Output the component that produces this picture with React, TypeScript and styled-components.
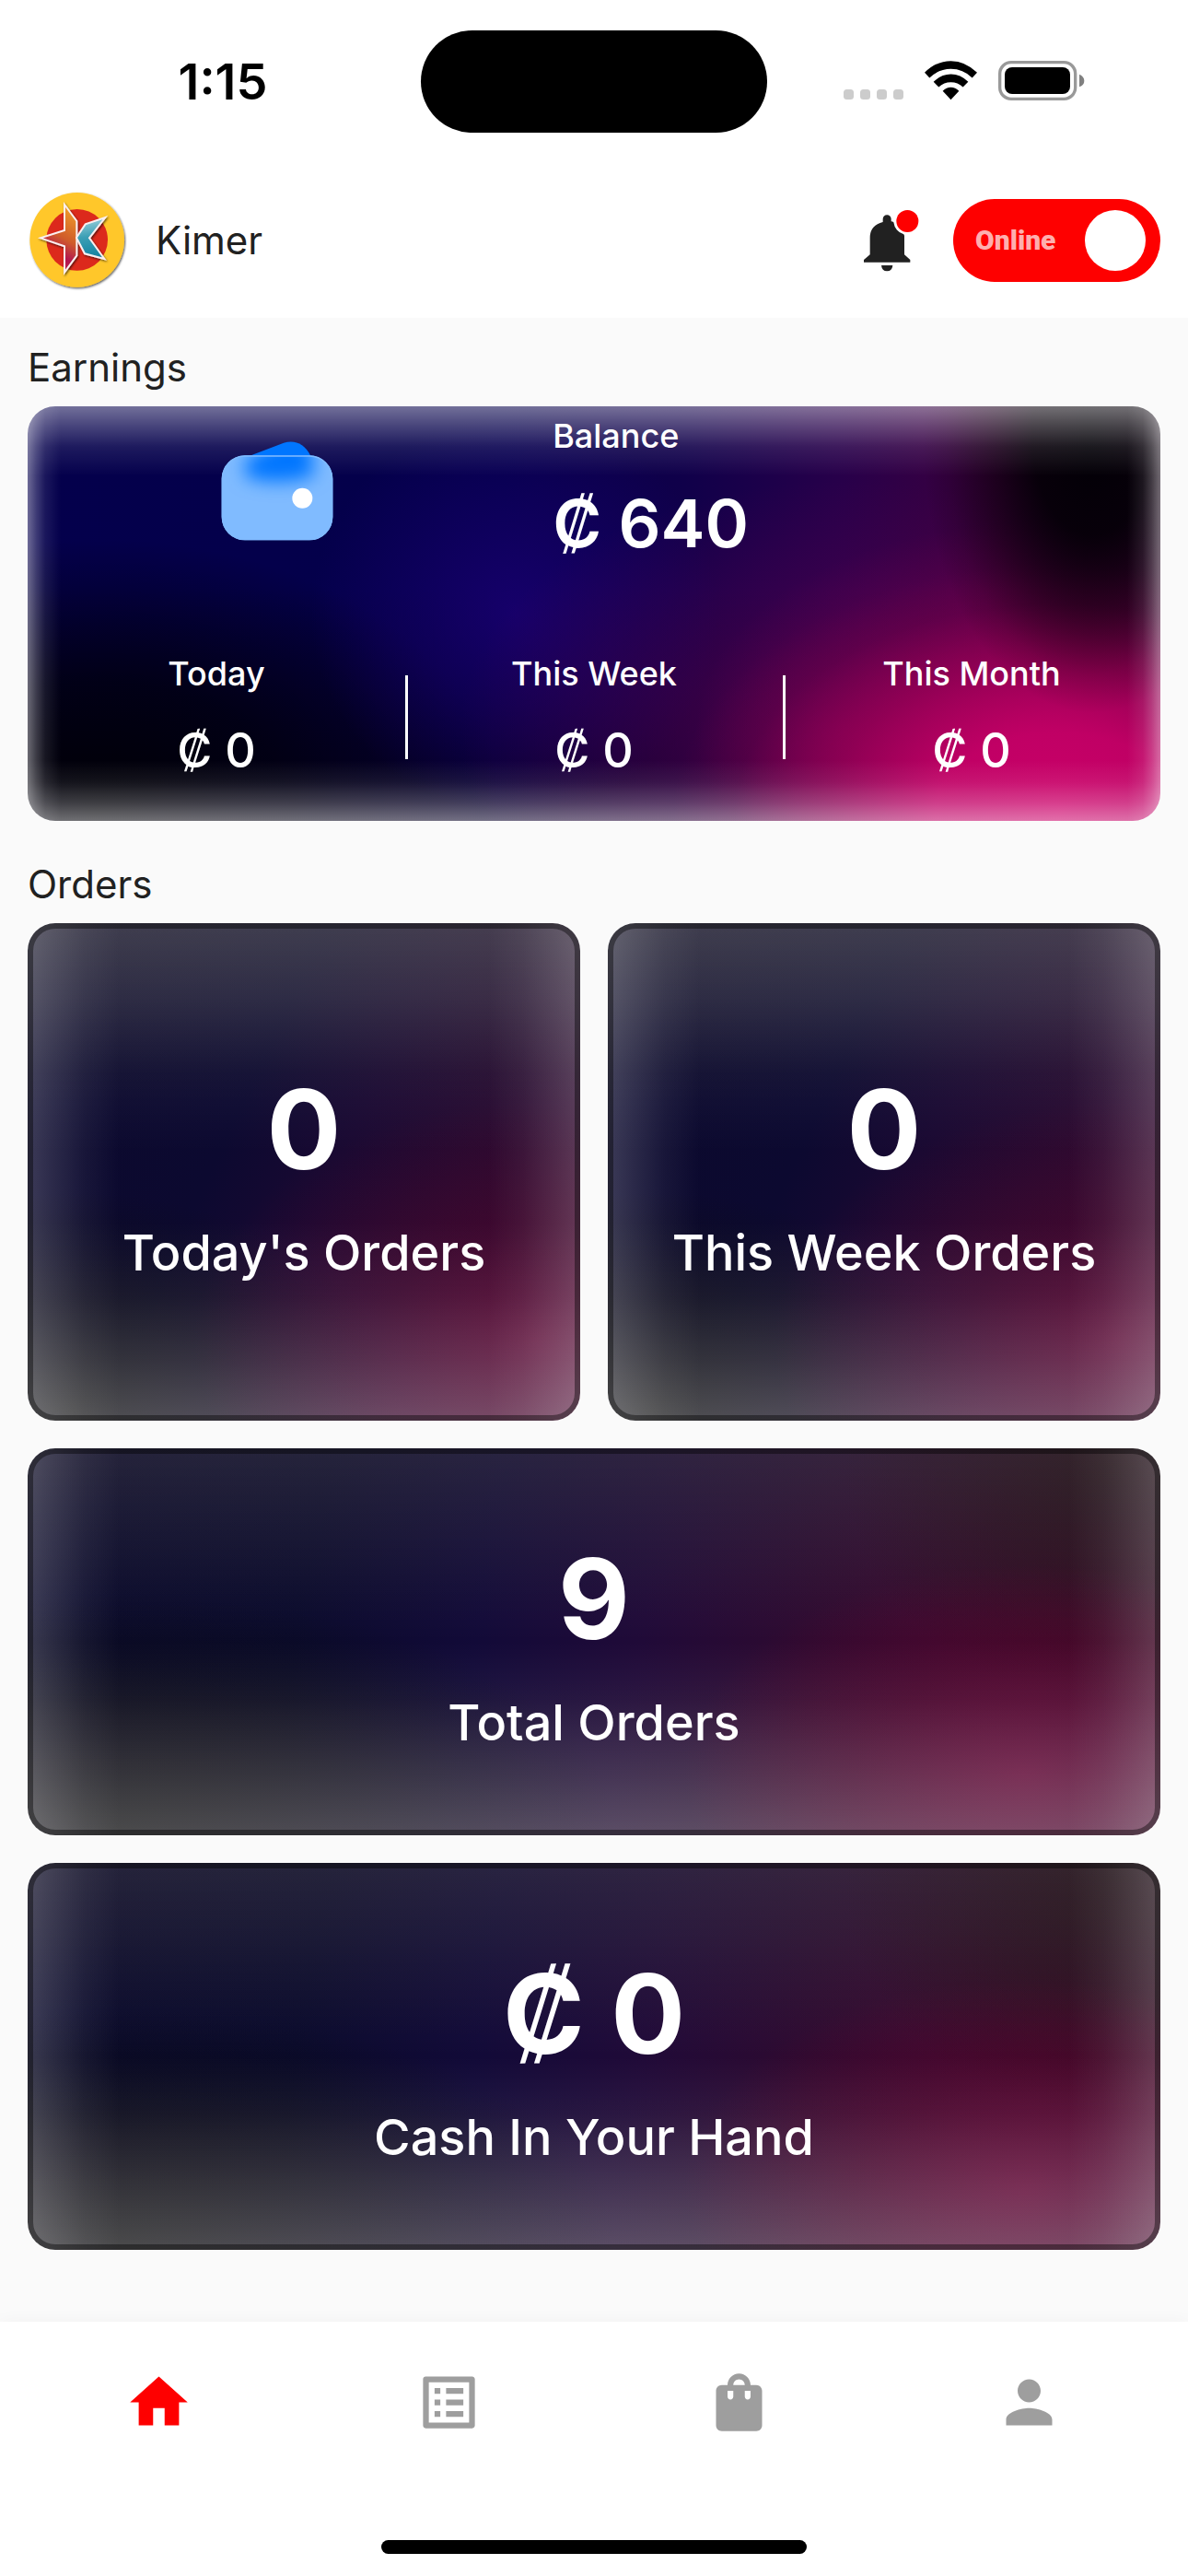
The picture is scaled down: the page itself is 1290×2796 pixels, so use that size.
import React from "react";
import styled, { createGlobalStyle, css } from "styled-components";
import { MdHome, MdListAlt, MdShoppingBag, MdPerson } from "react-icons/md";

const GlobalStyle = createGlobalStyle`
  *, *::before, *::after { box-sizing: border-box; }
  body {
    margin: 0;
    background: #fafafa;
    color: #212121;
    font-family: Inter, "Noto Sans", sans-serif;
    font-weight: 500;
  }
  h1, h2, p, dl, dt, dd { margin: 0; font-weight: inherit; }
`;

const Page = styled.div`
  display: flex;
  flex-direction: column;
  min-height: 100vh;
`;

/* ---------- status bar ---------- */

const StatusBar = styled.div`
  display: grid;
  grid-template-columns: 1fr 376px 1fr;
  align-items: center;
  padding: 33px 0;
  background: #fff;
  color: #000;
`;

const Clock = styled.time`
  padding-left: 27px;
  text-align: center;
  font-size: 54px;
  line-height: 64px;
  font-weight: 600;
`;

const Island = styled.div`
  height: 111px;
  border-radius: 56px;
  background: #000;
`;

const Indicators = styled.div`
  display: flex;
  justify-content: center;
  align-items: flex-end;
  gap: 23px;
  padding: 0 29px 3px 0;
  svg { display: block; }
`;

/* ---------- header ---------- */

const Header = styled.header`
  display: flex;
  align-items: center;
  height: 168px;
  padding: 0 30px;
  background: #fff;
`;

const UserName = styled.h1`
  flex: 1;
  margin-left: 28px;
  font-size: 42px;
  line-height: 48px;
  font-weight: 400;
`;

const BellButton = styled.button`
  display: block;
  margin-right: 37px;
  padding: 0;
  border: 0;
  background: none;
  svg { display: block; }
`;

const Switch = styled.label`
  display: flex;
  align-items: center;
  justify-content: space-between;
  width: 225px;
  height: 90px;
  padding: 0 16px 0 24px;
  border-radius: 45px;
  background: #fe0000;
  color: rgba(255, 255, 255, 0.7);
  font-family: Roboto, sans-serif;
  font-size: 30px;
  line-height: 36px;
  font-weight: 900;
`;

const SwitchInput = styled.input`
  appearance: none;
  width: 66px;
  height: 66px;
  margin: 0;
  border-radius: 50%;
  background: #fff;
`;

/* ---------- content ---------- */

const Main = styled.main`
  display: flex;
  flex-direction: column;
  gap: 45px;
  padding: 30px 30px 78px;
`;

const Section = styled.section`
  display: flex;
  flex-direction: column;
  gap: 18px;
`;

const SectionTitle = styled.h2`
  font-size: 42px;
  line-height: 48px;
  font-weight: 400;
`;

const EarningsCard = styled.div`
  display: flex;
  flex-direction: column;
  justify-content: space-between;
  min-height: 450px;
  padding: 10px 0 44px;
  border-radius: 30px;
  color: #fff;
  background:
    linear-gradient(90deg, rgba(255,255,255,0.42), rgba(255,255,255,0.24) 9px, rgba(255,255,255,0.09) 19px, rgba(255,255,255,0) 36px),
    linear-gradient(270deg, rgba(255,255,255,0.42), rgba(255,255,255,0.24) 9px, rgba(255,255,255,0.09) 19px, rgba(255,255,255,0) 36px),
    linear-gradient(180deg, rgba(255,255,255,0.44), rgba(255,255,255,0.28) 20px, rgba(255,255,255,0.1) 44px, rgba(255,255,255,0) 76px),
    linear-gradient(0deg, rgba(255,255,255,0.44), rgba(255,255,255,0.24) 20px, rgba(255,255,255,0.08) 42px, rgba(255,255,255,0) 66px),
    radial-gradient(ellipse 15% 66% at 94% 8%, #020006, rgba(3,0,6,0.92) 35%, rgba(6,0,6,0.5) 64%, rgba(8,0,6,0.15) 86%, rgba(8,0,6,0) 100%),
    radial-gradient(ellipse 34% 60% at 91% 98%, #cc0069, rgba(196,0,102,0.95) 32%, rgba(170,0,90,0.6) 60%, rgba(130,0,75,0.2) 84%, rgba(120,0,70,0) 100%),
    radial-gradient(ellipse 30% 50% at 89% 78%, rgba(185,0,96,0.6), rgba(160,0,85,0.3) 50%, rgba(140,0,75,0) 100%),
    radial-gradient(ellipse 34% 60% at 72% 78%, rgba(100,0,80,0.75), rgba(90,0,80,0.4) 50%, rgba(72,0,80,0) 100%),
    radial-gradient(ellipse 18% 48% at 43% 50%, rgba(28,0,118,0.75), rgba(28,0,118,0) 100%),
    radial-gradient(ellipse 36% 66% at 6% 98%, #000005, rgba(0,0,10,0.75) 48%, rgba(0,0,10,0) 100%),
    linear-gradient(0deg, rgba(8,0,26,0.7), rgba(8,0,26,0) 56%),
    linear-gradient(90deg, #04004c 0%, #04004a 42%, #10004a 58%, #28004a 72%, #3e003e 86%, #340030 100%);
`;

const BalanceRow = styled.div`
  display: grid;
  grid-template-columns: 44% 1fr;
`;

const WalletBox = styled.div`
  display: flex;
  justify-content: center;
  padding-top: 28px;
  svg { display: block; }
`;

const Balance = styled.dl`
  display: flex;
  flex-direction: column;
  gap: 30px;
  padding-left: 29px;
`;

const Caption = styled.dt`
  font-size: 36px;
  line-height: 44px;
`;

const BalanceAmount = styled.dd`
  font-size: 72px;
  line-height: 86px;
  font-weight: 600;
`;

const StatRow = styled.div`
  display: grid;
  grid-template-columns: repeat(3, 1fr);
  align-items: center;
`;

const Stat = styled.dl`
  display: flex;
  flex-direction: column;
  gap: 30px;
  text-align: center;
`;

const StatCell = styled.div`
  display: grid;
  grid-template-columns: 1fr;
  align-items: center;
  & + & {
    background: linear-gradient(#fff, #fff) left center / 3px 91px no-repeat;
  }
`;

const StatAmount = styled.dd`
  font-size: 52px;
  line-height: 64px;
`;

const OrderGrid = styled.div`
  display: grid;
  grid-template-columns: repeat(2, 1fr);
  gap: 30px;
`;

const sideHaze = css`
    linear-gradient(90deg, rgba(255,255,255,0.2), rgba(255,255,255,0.13) 28px, rgba(255,255,255,0.05) 62px, rgba(255,255,255,0) 100px),
    linear-gradient(270deg, rgba(255,255,255,0.2), rgba(255,255,255,0.13) 28px, rgba(255,255,255,0.05) 62px, rgba(255,255,255,0) 100px)
`;

const tallCard = css`
  min-height: 540px;
  background:
    ${sideHaze},
    linear-gradient(180deg, rgba(255,255,255,0.18), rgba(255,255,255,0.12) 15%, rgba(255,255,255,0.04) 30%, rgba(255,255,255,0) 46%),
    linear-gradient(0deg, rgba(255,255,255,0.27), rgba(255,255,255,0.16) 12%, rgba(255,255,255,0.06) 25%, rgba(255,255,255,0) 40%),
    linear-gradient(180deg, rgba(28,26,36,0.6), rgba(28,26,36,0) 36%),
    radial-gradient(ellipse 62% 48% at 92% 84%, rgba(92,8,52,0.9), rgba(80,6,46,0.5) 45%, rgba(66,4,40,0) 100%),
    radial-gradient(ellipse 60% 44% at 8% 98%, rgba(14,14,16,1), rgba(13,13,18,0.6) 50%, rgba(12,12,20,0) 100%),
    linear-gradient(115deg, #0b0a2c 0%, #0c0930 38%, #1a0932 54%, #260a30 70%, #34082c 92%);
`;

const wideCard = css`
  grid-column: 1 / -1;
  min-height: 420px;
  background:
    ${sideHaze},
    linear-gradient(180deg, rgba(255,255,255,0.09), rgba(255,255,255,0.05) 22%, rgba(255,255,255,0) 50%),
    linear-gradient(0deg, rgba(255,255,255,0.26), rgba(255,255,255,0.16) 16%, rgba(255,255,255,0.05) 35%, rgba(255,255,255,0) 50%),
    radial-gradient(ellipse 30% 54% at 88% 84%, rgba(98,8,54,0.95), rgba(88,6,48,0.55) 50%, rgba(75,4,40,0) 100%),
    radial-gradient(ellipse 44% 60% at 8% 98%, rgba(13,13,15,1), rgba(13,13,19,0.65) 50%, rgba(13,13,24,0) 100%),
    radial-gradient(ellipse 24% 62% at 96% 4%, rgba(28,14,18,0.9), rgba(28,14,20,0.5) 50%, rgba(28,14,22,0) 100%),
    linear-gradient(180deg, rgba(22,18,36,0.5), rgba(22,18,36,0) 45%, rgba(24,18,34,0) 60%, rgba(36,20,44,0.6)),
    linear-gradient(98deg, #09092a 0%, #0a0a2c 25%, #120a38 40%, #200a38 54%, #2e0a30 68%, #42082c 88%, #3e0826 100%);
`;

const OrderCard = styled.div<{ $wide?: boolean }>`
  display: flex;
  flex-direction: column-reverse;
  align-items: center;
  justify-content: center;
  gap: 24px;
  border-radius: 30px;
  box-shadow: inset 0 0 0 6px rgba(0, 0, 0, 0.4);
  color: #fff;
  ${(p) => (p.$wide ? wideCard : tallCard)}
`;

const OrderLabel = styled.p`
  font-size: 54px;
  line-height: 68px;
`;

const OrderValue = styled.p`
  font-size: 120px;
  line-height: 152px;
  font-weight: 700;
`;

/* ---------- bottom navigation ---------- */

const BottomNav = styled.nav`
  display: flex;
  flex-direction: column;
  justify-content: space-between;
  align-items: center;
  height: 276px;
  margin-top: auto;
  padding: 50px 15px 24px;
  background: #fff;
  box-shadow: 0 0 18px rgba(0, 0, 0, 0.04);
`;

const NavItems = styled.div`
  display: grid;
  grid-template-columns: repeat(4, 1fr);
  justify-items: center;
  width: 100%;
`;

const NavLink = styled.a<{ $active?: boolean }>`
  color: ${(p) => (p.$active ? "#fe0000" : "#9e9e9e")};
  svg { display: block; width: 75px; height: 75px; }
`;

const HomeIndicator = styled.div`
  width: 462px;
  height: 15px;
  border-radius: 8px;
  background: #000;
`;

/* ---------- drawings ---------- */

const Signal = () => (
  <svg width="65" height="12" viewBox="0 0 65 12" fill="#ccc">
    {[0, 18, 36, 54].map((x) => (
      <rect key={x} x={x} width="11" height="11" rx="3.5" />
    ))}
  </svg>
);

const Wifi = () => (
  <svg width="57" height="43" viewBox="0 0 171 128">
    <path d="M0 38Q38 0 85.500 0T171 38L155 55Q125 26 85.500 26T16 55Z" />
    <path d="M29 68Q54 43 85.500 43T142 68L125 85Q108 69 85.500 69T46 85Z" />
    <path d="M59 98Q71 86 85.500 86T112 98L85.500 126Z" />
  </svg>
);

const Battery = () => (
  <svg width="94" height="43" viewBox="0 0 282 129">
    <rect x="5" y="5" width="246" height="119" rx="37" fill="none" stroke="#999" strokeWidth="10" />
    <rect x="21" y="21" width="213" height="87" rx="24" />
    <path d="M264 44Q280 51 280 65T264 85Z" fill="#808080" />
  </svg>
);

const Avatar = () => (
  <svg width="111" height="111" viewBox="90 78 333 333" role="img" aria-label="Kimer logo">
    <defs>
      <linearGradient id="warm" x1="0.6" y1="0" x2="0.3" y2="1">
        <stop offset="0" stopColor="#ee9a2a" />
        <stop offset="0.45" stopColor="#cf5a2c" />
        <stop offset="0.7" stopColor="#b3184f" />
        <stop offset="1" stopColor="#c0204a" />
      </linearGradient>
      <linearGradient id="cool" x1="0.5" y1="0" x2="0.6" y2="1">
        <stop offset="0" stopColor="#9bd0db" />
        <stop offset="0.45" stopColor="#3c9fb5" />
        <stop offset="1" stopColor="#12809f" />
      </linearGradient>
      <filter id="drop" x="-20%" y="-20%" width="140%" height="140%">
        <feDropShadow dx="3" dy="4" stdDeviation="2.500" floodColor="#000" floodOpacity="0.65" />
      </filter>
    </defs>
    <circle cx="251" cy="241" r="154" fill="#ffc72c" filter="url(#drop)" />
    <circle cx="251" cy="241" r="100" fill="#dc291c" />
    <g stroke="#fbeff0" strokeWidth="6" strokeLinejoin="miter" filter="url(#drop)">
      <path d="M210 126L250 180V292L210 347V262L132 235L210 210Z" fill="url(#warm)" />
      <path d="M249 234L278 190L343 168L291 235L340 303L276 286Z" fill="url(#cool)" />
    </g>
  </svg>
);

const Bell = () => (
  <svg width="60" height="68" viewBox="175 136 180 204">
    <path
      fill="#212121"
      d="M237 178V168A13.500 13.500 0 0 1 264 168V176Q269 176 272 179A46 46 0 0 0 305 218L307 222V284L326 301V309H175V301L195 284V228Q195 190 237 178Z"
    />
    <path fill="#212121" d="M232 319H269Q267 338 250.500 338T232 319Z" />
    <circle cx="317" cy="175" r="36" fill="#fe0000" />
  </svg>
);

const Wallet = () => (
  <svg width="122" height="108" viewBox="0 0 366 324">
    <defs>
      <clipPath id="walletBody">
        <rect x="2" y="46" width="362" height="276" rx="76" />
      </clipPath>
      <filter id="soft" x="-50%" y="-80%" width="200%" height="260%">
        <feGaussianBlur stdDeviation="28" />
      </filter>
    </defs>
    <path fill="#0076ff" d="M92 48L204 5Q262 -10 291 46V60H92Z" />
    <rect x="2" y="46" width="362" height="276" rx="76" fill="#80bbff" />
    <g clipPath="url(#walletBody)">
      <path fill="#0076ff" filter="url(#soft)" d="M80 60L204 -10L291 10L304 110Q200 150 80 116Z" />
    </g>
    <rect x="4" y="48" width="358" height="272" rx="74" fill="none" stroke="#80bbff" strokeWidth="4" />
    <circle cx="265" cy="185" r="33" fill="#fff" />
  </svg>
);

/* ---------- data ---------- */

const stats = [
  { label: "Today", value: "₡ 0" },
  { label: "This Week", value: "₡ 0" },
  { label: "This Month", value: "₡ 0" },
];

const orders = [
  { label: "Today's Orders", value: "0" },
  { label: "This Week Orders", value: "0" },
  { label: "Total Orders", value: "9", wide: true },
  { label: "Cash In Your Hand", value: "₡ 0", wide: true },
];

const navItems = [
  { name: "Home", icon: <MdHome />, active: true },
  { name: "Orders", icon: <MdListAlt /> },
  { name: "Products", icon: <MdShoppingBag /> },
  { name: "Profile", icon: <MdPerson /> },
];

export default function App() {
  return (
    <Page>
      <GlobalStyle />
      <StatusBar>
        <Clock>1:15</Clock>
        <Island />
        <Indicators>
          <Signal />
          <Wifi />
          <Battery />
        </Indicators>
      </StatusBar>
      <Header>
        <Avatar />
        <UserName>Kimer</UserName>
        <BellButton type="button" aria-label="Notifications">
          <Bell />
        </BellButton>
        <Switch htmlFor="online">
          Online
          <SwitchInput id="online" type="checkbox" role="switch" defaultChecked />
        </Switch>
      </Header>
      <Main>
        <Section>
          <SectionTitle>Earnings</SectionTitle>
          <EarningsCard>
            <BalanceRow>
              <WalletBox>
                <Wallet />
              </WalletBox>
              <Balance>
                <Caption>Balance</Caption>
                <BalanceAmount>₡ 640</BalanceAmount>
              </Balance>
            </BalanceRow>
            <StatRow>
              {stats.map((s) => (
                <StatCell key={s.label}>
                  <Stat>
                    <Caption>{s.label}</Caption>
                    <StatAmount>{s.value}</StatAmount>
                  </Stat>
                </StatCell>
              ))}
            </StatRow>
          </EarningsCard>
        </Section>
        <Section>
          <SectionTitle>Orders</SectionTitle>
          <OrderGrid>
            {orders.map((o) => (
              <OrderCard key={o.label} $wide={o.wide}>
                <OrderLabel>{o.label}</OrderLabel>
                <OrderValue>{o.value}</OrderValue>
              </OrderCard>
            ))}
          </OrderGrid>
        </Section>
      </Main>
      <BottomNav aria-label="Main">
        <NavItems>
          {navItems.map((n) => (
            <NavLink key={n.name} href="#" aria-label={n.name} $active={n.active}>
              {n.icon}
            </NavLink>
          ))}
        </NavItems>
        <HomeIndicator />
      </BottomNav>
    </Page>
  );
}
